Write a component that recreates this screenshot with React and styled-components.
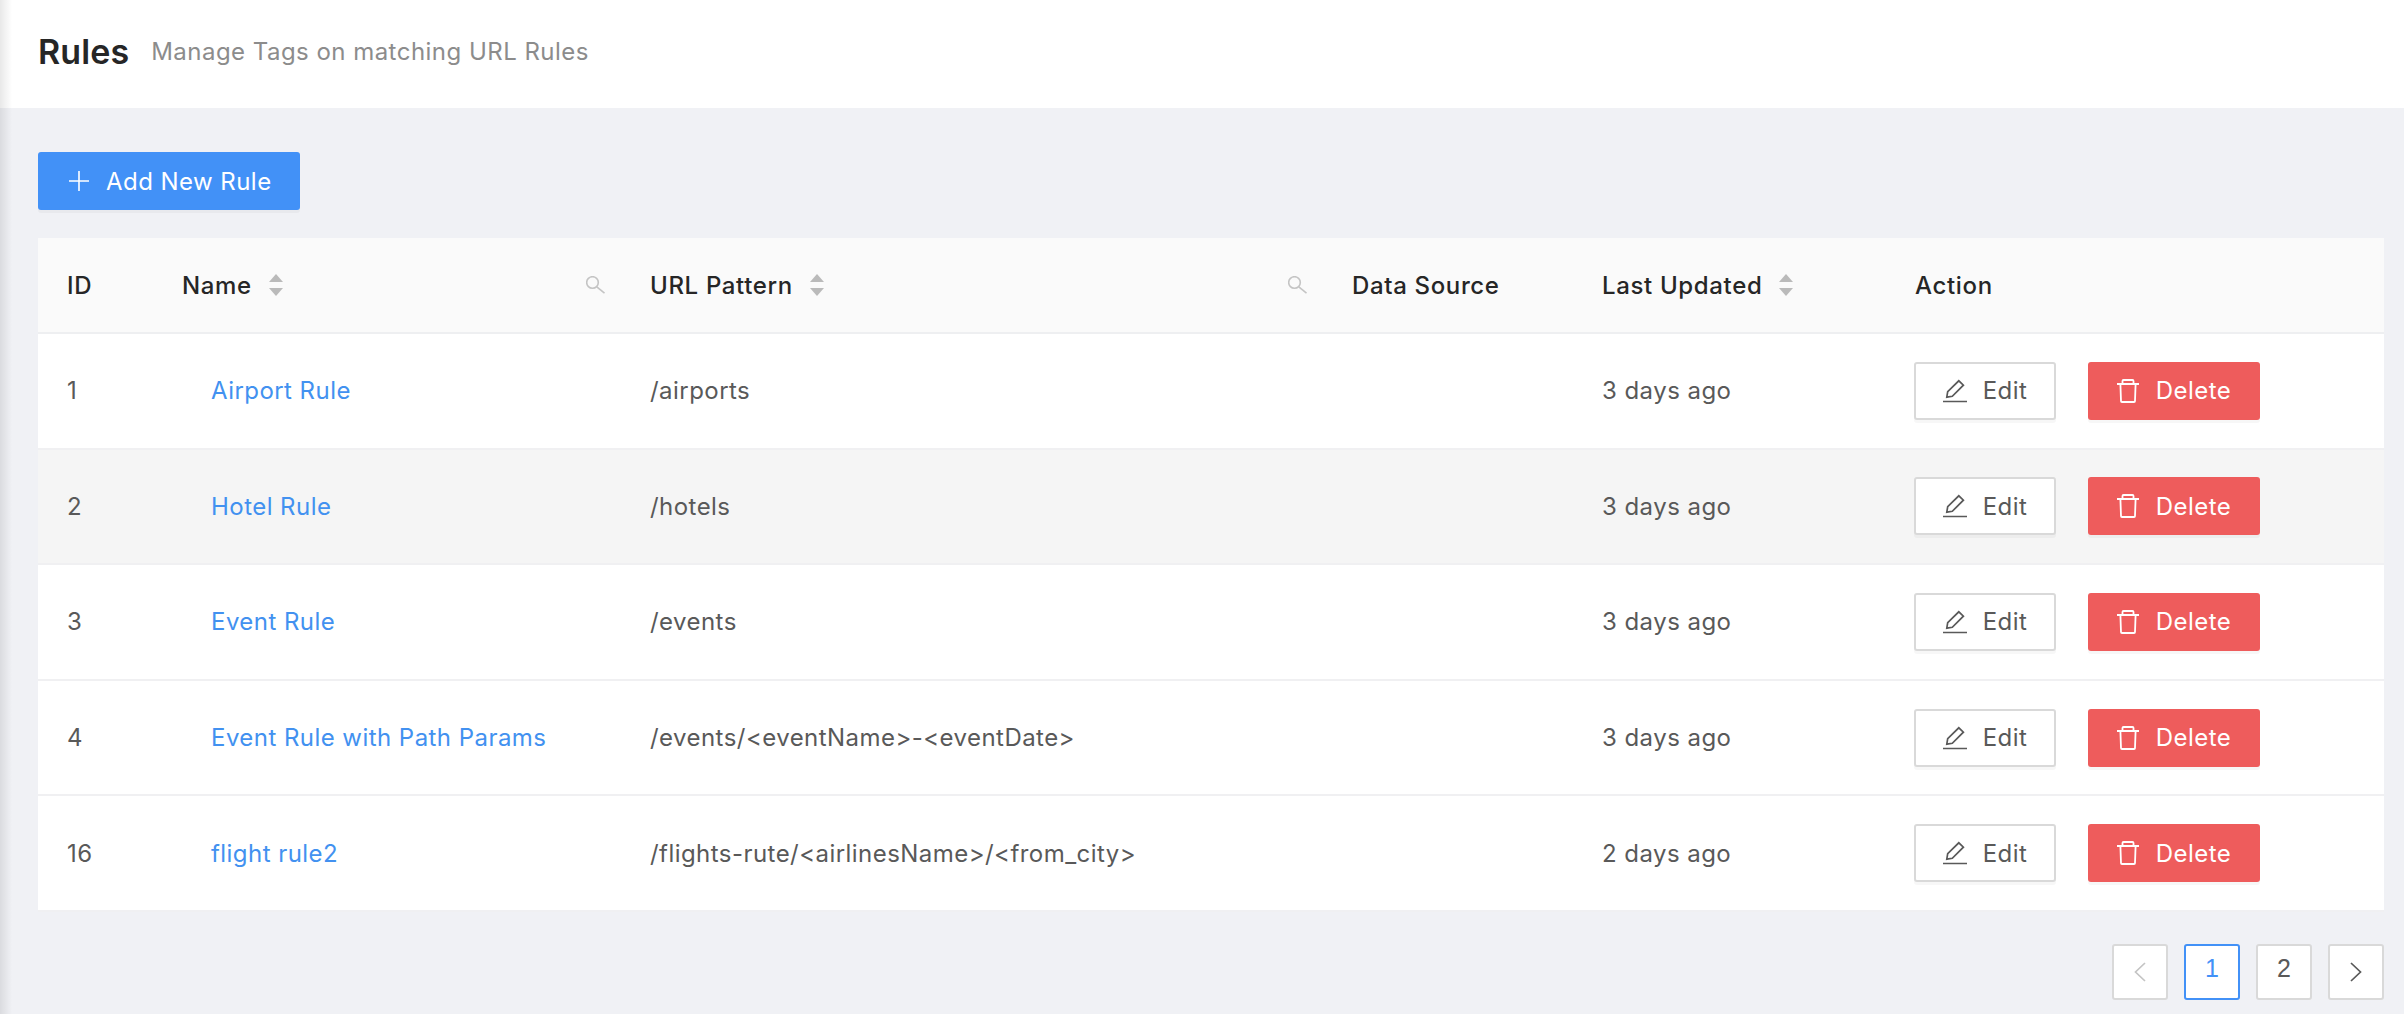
import React from 'react';
import styled, { createGlobalStyle } from 'styled-components';

const Global = createGlobalStyle`
  html, body { margin: 0; padding: 0; background: #f0f2f5; }
  body { font-family: Inter, "Liberation Sans", sans-serif; -webkit-font-smoothing: antialiased; }
`;
const Page = styled.div`
  position: relative;
  width: 2404px;
  height: 1014px;
  overflow: hidden;
  background: #f0f1f5;
`;
const SideShadow = styled.div`
  position: absolute;
  left: 0;
  top: 0;
  bottom: 0;
  width: 12px;
  background: linear-gradient(to right, rgba(0, 0, 0, 0.09), rgba(0, 0, 0, 0));
  pointer-events: none;
`;
const Header = styled.header`
  height: 108px;
  background: #fff;
  display: flex;
  align-items: center;
  padding: 0 38px 6px;
  box-sizing: border-box;
  gap: 22px;
`;
const Title = styled.h1`
  margin: 0;
  font-size: 34px;
  font-weight: 600;
  letter-spacing: 0.1px;
  color: #262626;
`;
const Subtitle = styled.span`
  font-size: 24px;
  letter-spacing: 0.47px;
  color: #8c8c8c;
`;
const Content = styled.main`
  padding: 44px 20px 0 38px;
`;
const AddButton = styled.button`
  display: flex;
  align-items: center;
  gap: 17px;
  width: 262px;
  height: 58px;
  padding: 0 0 0 31px;
  border: 0;
  border-radius: 3px;
  background: #4291f7;
  color: #fff;
  font: 400 24px Inter, sans-serif;
  letter-spacing: 0.45px;
  box-shadow: 0 3px 0 rgba(0, 0, 0, 0.03);
`;
const Table = styled.div`
  margin-top: 28px;
  background: #fff;
`;
const cols = '115px 468px 702px 250px 313px 498px';
const HeadRow = styled.div`
  display: grid;
  grid-template-columns: ${cols};
  height: 94px;
  background: #fafafa;
  border-bottom: 2px solid #eeeff1;
`;
const HeadCell = styled.div`
  display: flex;
  align-items: center;
  justify-content: space-between;
  padding: 0 15px 0 29px;
  font-size: 24px;
  font-weight: 500;
  letter-spacing: 0.65px;
  color: #262626;
`;
const HeadLabel = styled.span`
  display: flex;
  align-items: center;
  gap: 17px;
`;
const Row = styled.div`
  display: grid;
  grid-template-columns: ${cols};
  height: 115.6px;
  box-sizing: border-box;
  background: ${p => (p.$hover ? '#f5f5f5' : '#fff')};
  border-bottom: 2px solid #f0f0f2;
`;
const Cell = styled.div`
  display: flex;
  align-items: center;
  padding-left: 29px;
  font-size: 24px;
  letter-spacing: 0.45px;
  color: #595959;
`;
const NameLink = styled.a`
  color: #4291f0;
  margin-left: 29px;
`;
const ActionCell = styled(Cell)`
  gap: 32px;
  padding-left: 28px;
`;
const Btn = styled.button`
  display: flex;
  align-items: center;
  justify-content: center;
  height: 58px;
  box-sizing: border-box;
  border-radius: 3px;
  padding: 0;
  font: 400 24px Inter, sans-serif;
  letter-spacing: 0.48px;
  box-shadow: 0 3px 0 rgba(0, 0, 0, 0.03);
`;
const EditBtn = styled(Btn)`
  width: 142px;
  gap: 16px;
  background: #fff;
  border: 2px solid #d9d9d9;
  color: #595959;
`;
const DeleteBtn = styled(Btn)`
  width: 172px;
  gap: 17px;
  background: #ee5c5c;
  border: 0;
  color: #fff;
`;
const Pager = styled.nav`
  display: flex;
  justify-content: flex-end;
  gap: 16px;
  margin-top: 32px;
`;
const PageItem = styled.div`
  width: 56px;
  height: 56px;
  box-sizing: border-box;
  display: flex;
  align-items: center;
  justify-content: center;
  background: #fff;
  border: 2px solid ${p => (p.$active ? '#4291f7' : '#d9d9d9')};
  border-radius: 3px;
  font: 400 25px "Liberation Sans", Arial, sans-serif;
  color: ${p => (p.$active ? '#4291f7' : '#595959')};
  padding-bottom: 6px;
`;
const ArrowItem = styled(PageItem)`
  padding-bottom: 0;
  color: ${p => (p.$disabled ? '#c4c4c4' : '#595959')};
`;

const Sort = () => (
  <svg width="14" height="22" viewBox="0 0 14 22" fill="#bababa"><path d="M7 0l7 8H0zM7 22l7-8H0z" /></svg>
);
const Search = () => (
  <svg width="20" height="18" viewBox="0 0 20 18" fill="none" stroke="#c4c4c4" strokeWidth="1.6"><circle cx="6.500" cy="6.500" r="5.800" /><path d="M10.800 10.800l7.700 6.400" /></svg>
);
const Plus = () => (
  <svg width="20" height="20" viewBox="0 0 20 20" stroke="#fff" strokeWidth="1.6"><path d="M10 0v20M0 10h20" /></svg>
);
const Pen = () => (
  <svg width="24" height="24" viewBox="0 0 24 24" fill="none" stroke="#595959" strokeWidth="1.7"><path d="M0 22.500h24M3.800 18.200l.9-5.500L15.800 1.800l4.600 4.400L9.300 17.300z" /></svg>
);
const Trash = () => (
  <svg width="22" height="24" viewBox="0 0 22 24" fill="none" stroke="#fff" strokeWidth="1.8"><path d="M0 5h22M3.400 5l.6 17q0 1 1 1h12q1 0 1-1l.6-17M5.500 5V2q0-1 1-1h9q1 0 1 1v3" /></svg>
);
const Chevron = ({ left, color }) => (
  <svg width="12" height="20" viewBox="0 0 12 20" fill="none" stroke={color} strokeWidth="1.7"><path d={left ? 'M11 1L1.500 10 11 19' : 'M1 1l9.500 9L1 19'} /></svg>
);

const rows = [
  ['1', 'Airport Rule', '/airports', '3 days ago'],
  ['2', 'Hotel Rule', '/hotels', '3 days ago'],
  ['3', 'Event Rule', '/events', '3 days ago'],
  ['4', 'Event Rule with Path Params', '/events/<eventName>-<eventDate>', '3 days ago'],
  ['16', 'flight rule2', '/flights-rute/<airlinesName>/<from_city>', '2 days ago'],
];

export default function App() {
  return (
    <Page>
      <Global />
      <Header>
        <Title>Rules</Title>
        <Subtitle>Manage Tags on matching URL Rules</Subtitle>
      </Header>
      <Content>
        <AddButton><Plus />Add New Rule</AddButton>
        <Table>
          <HeadRow>
            <HeadCell>ID</HeadCell>
            <HeadCell><HeadLabel>Name <Sort /></HeadLabel><Search /></HeadCell>
            <HeadCell><HeadLabel>URL Pattern <Sort /></HeadLabel><Search /></HeadCell>
            <HeadCell>Data Source</HeadCell>
            <HeadCell><HeadLabel>Last Updated <Sort /></HeadLabel></HeadCell>
            <HeadCell>Action</HeadCell>
          </HeadRow>
          {rows.map((r, i) => (
            <Row key={r[0]} $hover={i === 1}>
              <Cell>{r[0]}</Cell>
              <Cell><NameLink>{r[1]}</NameLink></Cell>
              <Cell>{r[2]}</Cell>
              <Cell />
              <Cell>{r[3]}</Cell>
              <ActionCell>
                <EditBtn><Pen />Edit</EditBtn>
                <DeleteBtn><Trash />Delete</DeleteBtn>
              </ActionCell>
            </Row>
          ))}
        </Table>
        <Pager>
          <ArrowItem $disabled><Chevron left color="#c4c4c4" /></ArrowItem>
          <PageItem $active>1</PageItem>
          <PageItem>2</PageItem>
          <ArrowItem><Chevron color="#595959" /></ArrowItem>
        </Pager>
      </Content>
      <SideShadow />
    </Page>
  );
}
